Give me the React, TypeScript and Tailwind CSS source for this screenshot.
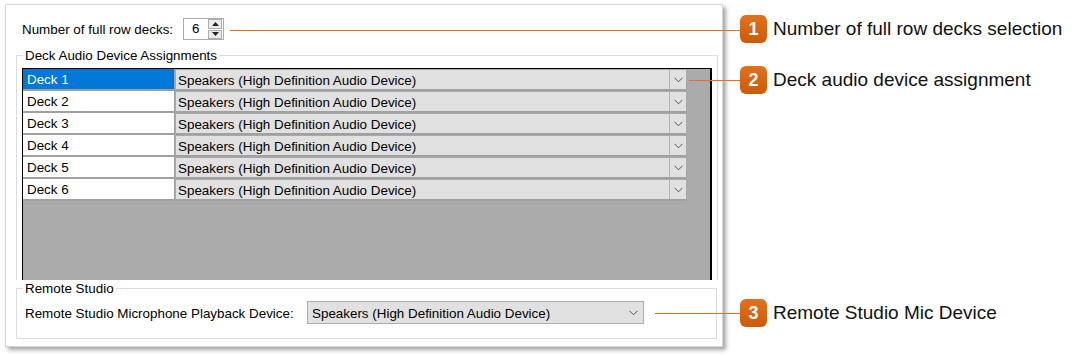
import React from "react"

const DEVICE = "Speakers (High Definition Audio Device)"
const decks = ["Deck 1", "Deck 2", "Deck 3", "Deck 4", "Deck 5", "Deck 6"]

// small chevron used by the combo boxes
const Chevron = () => (
  <svg width="9" height="6" viewBox="0 0 9 6">
    <path d="M0.5 0.8 L4.5 4.8 L8.5 0.8" fill="none" stroke="#555" strokeWidth="1" />
  </svg>
)

const Badge = ({ n }: { n: number }) => (
  <div className="w-[27px] h-[28px] rounded-[6px] bg-gradient-to-b from-[#e3711b] to-[#cb5a0b] flex items-center justify-center text-white font-bold text-[18px] leading-none shrink-0">
    {n}
  </div>
)

const DeckRow = ({ name, selected }: { name: string; selected: boolean }) => (
  <div className="flex h-[22px]">
    <div
      className={`w-[152px] h-[22px] border-r border-b-2 border-[#a0a0a0] pl-[4px] pt-[3px] flex items-center ${
        selected ? "bg-[#0078d7] text-white" : "bg-white text-black"
      }`}
    >
      {name}
    </div>
    <div className="w-[512px] h-[22px] flex bg-[#e1e1e1] border border-b-2 border-[#a9a9a9] border-b-[#a0a0a0]">
      <div className="flex-1 pl-[2px] pt-[3px] flex items-center text-black">{DEVICE}</div>
      <div className="w-[17px] border-l border-[#b4b4b4] flex items-center justify-center">
        <Chevron />
      </div>
    </div>
  </div>
)

export default function App() {
  return (
    <div className="relative w-[1079px] h-[356px] bg-white pt-[4px] pl-[5px] font-['Liberation_Sans',Arial,sans-serif] text-[13.4px] text-black">
      {/* dialog panel */}
      <div className="w-[718px] h-[343px] bg-white border border-[#d6d6d6] shadow-[3px_3px_4px_rgba(0,0,0,0.35)] pl-[10px] pr-[5px] pb-[7px]">
        <div className="pl-[6px] pt-[13px] flex items-center h-[35px]">
          <span className="w-[161px] pt-[2px]">Number of full row decks:</span>
          <div className="w-[41px] h-[22px] border border-[#acacac] flex items-center">
            <span className="flex-1 pl-[8px] pt-[1px]">6</span>
            <div className="w-[14px] h-[20px] mr-[1px] flex flex-col gap-[1px]">
              <div className="flex-1 bg-[#ececec] border border-[#adadad] flex items-center justify-center">
                <svg width="7" height="4" viewBox="0 0 7 4">
                  <path d="M3.5 0 L7 4 L0 4 Z" fill="#222" />
                </svg>
              </div>
              <div className="flex-1 bg-[#ececec] border border-[#adadad] flex items-center justify-center">
                <svg width="7" height="4" viewBox="0 0 7 4">
                  <path d="M0 0 L7 0 L3.5 4 Z" fill="#222" />
                </svg>
              </div>
            </div>
          </div>
        </div>

        <fieldset className="mt-[8px] h-[232px] border-x border-t border-[#dcdcdc] px-[5px]">
          <legend className="ml-[1px] px-[2px] leading-[15px]">Deck Audio Device Assignments</legend>
          <div className="mt-[5px] w-[690px] h-[212px] bg-[#ababab] border-l border-t border-r-2 border-black">
            {decks.map((d, i) => (
              <DeckRow key={d} name={d} selected={i === 0} />
            ))}
          </div>
        </fieldset>

        <fieldset className="mt-[1px] border border-[#dcdcdc] pl-[6px] pb-[14px]">
          <legend className="px-[2px] leading-[15px]">Remote Studio</legend>
          <div className="mt-[5px] pl-[2px] flex items-center">
            <span className="w-[282px] pt-[3px]">Remote Studio Microphone Playback Device:</span>
            <div className="w-[337px] h-[23px] bg-[#e1e1e1] border border-[#adadad] flex items-center">
              <span className="flex-1 pl-[4px] pt-[2px]">{DEVICE}</span>
              <div className="w-[18px] flex items-center justify-center mr-[1px]">
                <Chevron />
              </div>
            </div>
          </div>
        </fieldset>
      </div>

      {/* callouts */}
      <div className="absolute left-[230px] top-[15px] flex items-center h-[28px]">
        <div className="w-[510px] h-px bg-[#ec6d1c] mt-[2px]" />
        <Badge n={1} />
        <span className="ml-[6px] text-[19px] text-[#111]">Number of full row decks selection</span>
      </div>
      <div className="absolute left-[689px] top-[66px] flex items-center h-[28px]">
        <div className="w-[51px] h-px bg-[#ec6d1c] mt-[1px]" />
        <Badge n={2} />
        <span className="ml-[6px] text-[19px] text-[#111]">Deck audio device assignment</span>
      </div>
      <div className="absolute left-[655px] top-[299px] flex items-center h-[28px]">
        <div className="w-[85px] h-px bg-[#ec6d1c]" />
        <Badge n={3} />
        <span className="ml-[6px] text-[19px] text-[#111]">Remote Studio Mic Device</span>
      </div>
    </div>
  )
}
